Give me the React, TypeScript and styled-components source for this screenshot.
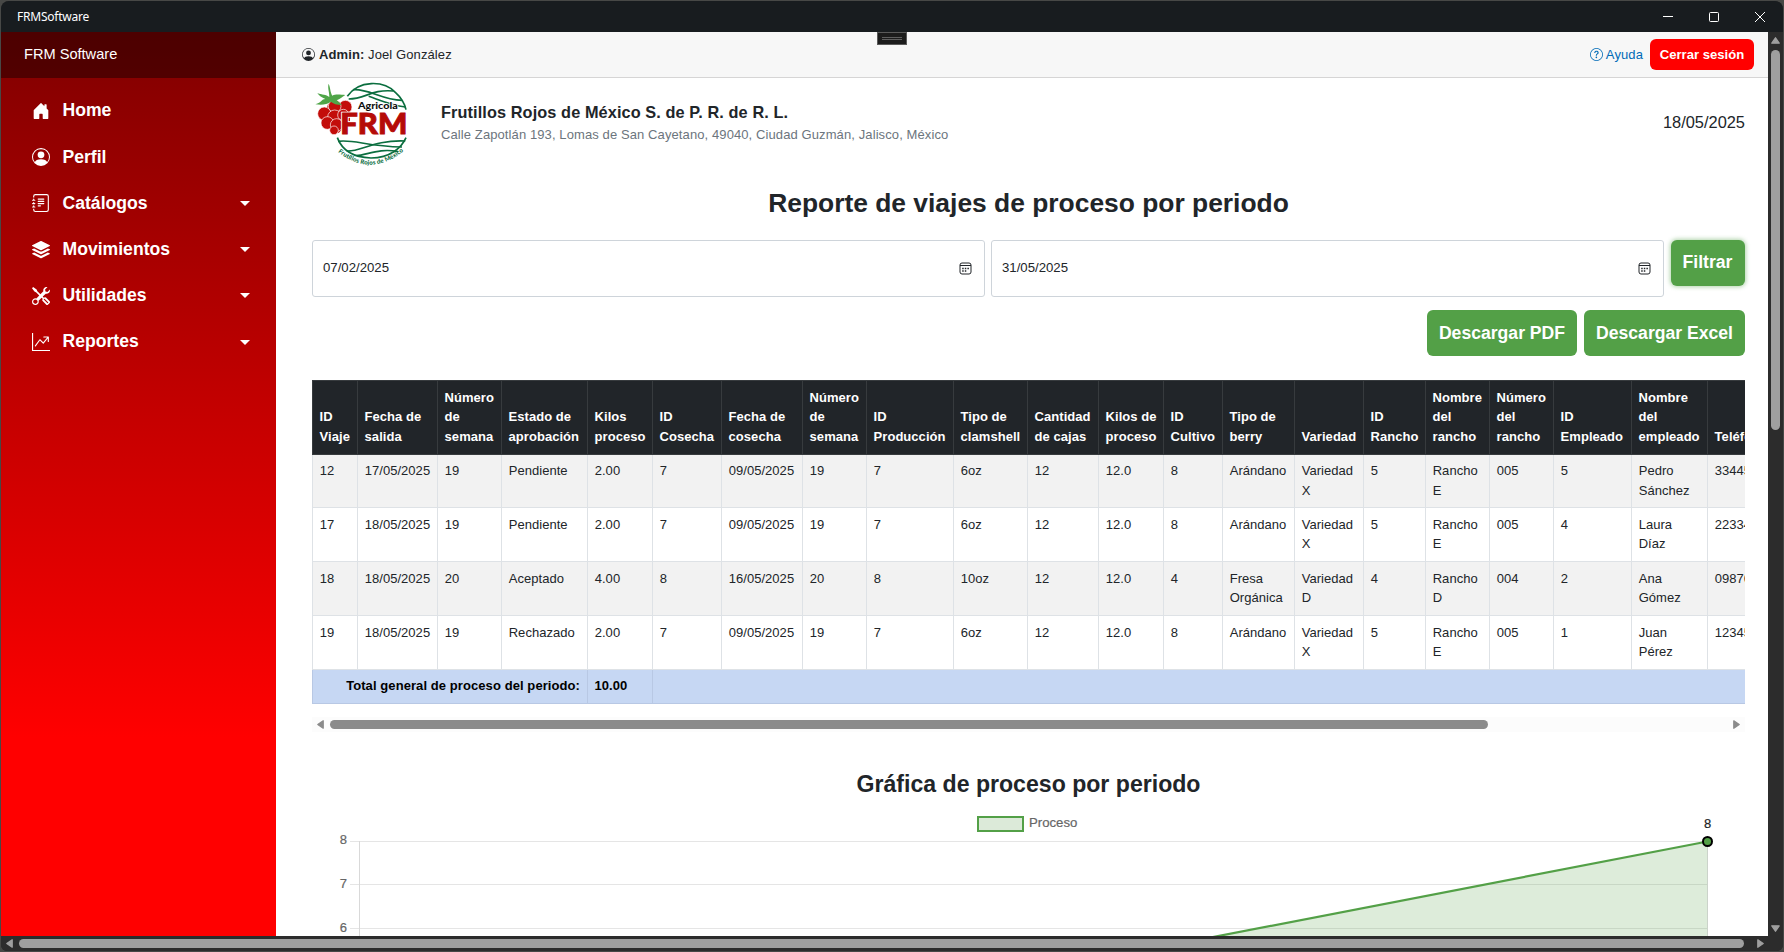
import React from "react";
import styled, { createGlobalStyle, css } from "styled-components";
import {
  BsHouseDoorFill,
  BsPersonCircle,
  BsJournalText,
  BsStack,
  BsTools,
  BsGraphUpArrow,
  BsQuestionCircle,
} from "react-icons/bs";

const GlobalStyle = createGlobalStyle`
  *, *::before, *::after { box-sizing: border-box; }
  body {
    margin: 0;
    overflow: hidden;
    background: #474846;
    color: #212529;
    font: 13px/19.5px "Liberation Sans", Arial, sans-serif;
  }
`;

const Desktop = styled.div`
  width: 1784px;
  height: 952px;
  padding: 1px;
  background: #474846;
`;

const Window = styled.div`
  display: flex;
  flex-direction: column;
  height: 950px;
  overflow: hidden;
  border-radius: 8px 8px 6px 6px;
  background: #2c2c2c;
`;

const TitleBar = styled.div`
  display: flex;
  align-items: center;
  justify-content: space-between;
  flex: none;
  height: 31px;
  padding: 0 17px 0 16px;
  background: #181c1f;
  color: #fff;
  font: 12px/16px "Noto Sans", "Open Sans", sans-serif;
`;

const WindowTitle = styled.span`
  letter-spacing: -0.22px;
`;

const WindowButtons = styled.div`
  display: flex;
  gap: 34px;

  svg {
    display: block;
    width: 12px;
    height: 12px;
    fill: none;
    stroke: #fff;
  }
`;

const Viewport = styled.div`
  display: flex;
  flex: none;
  height: 904px;
`;

const Sidebar = styled.aside`
  flex: none;
  width: 275px;
  background: linear-gradient(180deg, #800000 0%, #ff0000 78%);
  color: #fff;
`;

const Brand = styled.div`
  display: flex;
  align-items: center;
  height: 46px;
  padding: 0 0 0 23px;
  background: rgba(0, 0, 0, 0.4);
  font-size: 14.6px;
`;

const Nav = styled.nav`
  display: flex;
  flex-direction: column;
  padding: 10px 26px 0 31px;
`;

const NavItem = styled.a`
  display: flex;
  align-items: center;
  height: 46.2px;
  font-size: 17.6px;
  font-weight: 700;

  svg {
    width: 18px;
    height: 18px;
    margin-right: 12.5px;
  }
`;

const Caret = styled.span`
  margin-left: auto;
  border: 5px solid transparent;
  border-top-color: #fff;
  border-bottom: 0;
`;

const Main = styled.main`
  display: flex;
  flex-direction: column;
  flex: 1;
  min-width: 0;
  overflow: hidden;
  background: #fff;
`;

const TopBar = styled.header`
  position: relative;
  display: flex;
  align-items: center;
  flex: none;
  height: 46px;
  padding: 0 14px 0 26px;
  border-bottom: 1px solid #d6d5d5;
  background: #f7f7f7;
`;

const DebugHandle = styled.div`
  position: absolute;
  left: 601px;
  top: 0;
  width: 30px;
  height: 13px;
  padding: 4px 4px;
  border: 1px solid #5a5a5a;
  background: #1c1c1c;

  &::before {
    content: "";
    display: block;
    height: 3px;
    border: solid #5f5f5f;
    border-width: 1px 0;
  }
`;

const UserLabel = styled.div`
  display: flex;
  align-items: center;
  gap: 4px;
  letter-spacing: 0.1px;
`;

const HelpLink = styled.a`
  display: flex;
  align-items: center;
  gap: 3px;
  margin-left: auto;
  color: #006bb7;
  letter-spacing: 0.1px;
`;

const LogoutButton = styled.button`
  width: 104px;
  height: 31px;
  margin-left: 7px;
  padding: 0;
  border: 0;
  border-radius: 6px;
  background: #ff0000;
  color: #fff;
  font: 700 13.1px/20px "Liberation Sans", Arial, sans-serif;
`;

const Content = styled.section`
  display: flex;
  flex-direction: column;
  flex: 1;
  padding: 0 23px 0 36px;
`;

const CompanyHeader = styled.div`
  display: flex;
  align-items: center;
  flex: none;
  height: 89px;
`;

const LogoArt = styled.svg`
  width: 100px;
  height: 88px;
  margin-right: 29px;
`;

const CompanyName = styled.div`
  margin: -1px 0 1px;
  font-size: 16.3px;
  font-weight: 700;
  line-height: 24px;
  letter-spacing: 0.1px;
`;

const CompanyAddress = styled.div`
  color: #6c757d;
  line-height: 20px;
  letter-spacing: 0.1px;
`;

const ReportDate = styled.div`
  margin-left: auto;
  font-size: 16.4px;
`;

const PageTitle = styled.h1`
  flex: none;
  margin: 18px 0 19px;
  font-size: 26.4px;
  line-height: 36px;
  text-align: center;
`;

const Filters = styled.div`
  display: flex;
  align-items: flex-start;
  flex: none;
  gap: 6px;
  height: 57px;
`;

const DateField = styled.div`
  display: flex;
  align-items: center;
  justify-content: space-between;
  flex: 1;
  height: 57px;
  padding: 0 12px 2px 10px;
  border: 1px solid #ced4da;
  border-radius: 3px;
  font-size: 13.2px;

  svg {
    width: 13px;
    height: 13px;
    margin-top: 2px;
  }
`;

const GreenButton = styled.button<{ $focused?: boolean }>`
  height: 46px;
  border: 0;
  border-radius: 6px;
  background: #53a047;
  color: #fff;
  font: 700 17.6px/26px "Liberation Sans", Arial, sans-serif;
  ${(p) =>
    p.$focused
      ? css`
          width: 74px;
          margin-left: 1px;
          padding: 0 1px 3px 0;
          box-shadow: 0 0 4px 1px rgba(83, 160, 71, 0.45);
        `
      : css`
          padding: 0 12px 1px;
        `}
`;

const Downloads = styled.div`
  display: flex;
  justify-content: flex-end;
  flex: none;
  gap: 7px;
  margin-top: 13px;
`;

const TableScroller = styled.div`
  flex: none;
  height: 324px;
  margin-top: 24px;
  overflow: hidden;
`;

const Table = styled.table`
  width: 1760px;
  table-layout: fixed;
  border-spacing: 0;
`;

const HeadRow = styled.tr`
  height: 75px;
`;

const HeadCell = styled.th`
  padding: 6px 0 8px 6.6px;
  border: solid #373b3e;
  border-width: 1px 0 1px 1px;
  background: #212529;
  color: #fff;
  text-align: left;
  vertical-align: bottom;
  white-space: pre;
  letter-spacing: 0.04px;
`;

const Row = styled.tr<{ $first: boolean; $striped: boolean }>`
  height: ${(p) => (p.$first ? 53 : 54)}px;
  background: ${(p) => (p.$striped ? "#f2f2f2" : "#fff")};

  td {
    padding-top: ${(p) => (p.$first ? 6 : 6.7)}px;
  }
`;

const Cell = styled.td`
  padding: 0 0 0 6.7px;
  border: solid #dee2e6;
  border-width: 0 0 1px 1px;
  vertical-align: top;
  white-space: pre;
  letter-spacing: 0.04px;
`;

const TotalRow = styled.tr`
  height: 34px;
  background: #c6d7f3;
  color: #000;
  font-weight: 700;
  letter-spacing: 0.08px;
`;

const TotalCell = styled.td<{ $right?: boolean }>`
  padding: 0 7px 1px 6.5px;
  border: solid #b8c8e4;
  border-width: 0 0 1px 1px;
  text-align: ${(p) => (p.$right ? "right" : "left")};
`;

const ScrollTrack = styled.div<{ $tone: "light" | "dark" }>`
  display: flex;
  align-items: center;
  justify-content: space-between;
  flex: none;
  height: 15px;
  margin-top: ${(p) => (p.$tone === "light" ? "13px" : "0")};
  padding: ${(p) => (p.$tone === "light" ? "0 4px" : "0 18px 0 4px")};
  background: ${(p) => (p.$tone === "light" ? "#fcfcfc" : "#2c2c2c")};
`;

const Thumb = styled.div<{ $width: number; $left: number; $color: string }>`
  width: ${(p) => p.$width}px;
  height: 9px;
  margin: 0 auto 0 ${(p) => p.$left}px;
  border-radius: 5px;
  background: ${(p) => p.$color};
`;

const VerticalScroll = styled.div`
  display: flex;
  flex-direction: column;
  align-items: center;
  flex: none;
  width: 15px;
  padding: 5px 0 4px;
  background: #2c2c2c;
`;

const VerticalThumb = styled.div`
  width: 9px;
  height: 380px;
  margin: 6px 0 auto;
  border-radius: 5px;
  background: #9f9f9f;
`;

const ArrowArt = styled.svg<{ $turn: number }>`
  display: block;
  width: 9px;
  height: 7px;
  flex: none;
  transform: rotate(${(p) => p.$turn}deg);
`;

const ChartTitle = styled.h2`
  flex: none;
  margin: 37px 0 0;
  font-size: 23.1px;
  line-height: 30px;
  text-align: center;
`;

const ChartArt = styled.svg`
  display: block;
  flex: none;
  width: 1433px;
  height: 137px;
  font: 13px "Liberation Sans", Arial, sans-serif;
`;

const Arrow = ({ turn, color }: { turn: number; color: string }) => (
  <ArrowArt $turn={turn} viewBox="0 0 9 7">
    <path d="M4.5 0.8 L8.2 6.2 H0.8 Z" fill={color} stroke={color} strokeWidth="1.3" strokeLinejoin="round" />
  </ArrowArt>
);

const CalendarIcon = () => (
  <svg viewBox="0 0 13 13" fill="none" stroke="#212529">
    <rect x="1" y="1" width="11" height="11" rx="2" />
    <path d="M1 3.5H12" />
    <path d="M3.2 6.5h1.5M5.8 6.5h1.5M8.4 6.5h1.5M3.2 9h1.5M5.8 9h1.5" strokeWidth="1.5" />
  </svg>
);

const berries = [
  [136, 108, 20], [104, 106, 19], [73, 128, 20], [104, 138, 21],
  [130, 132, 17], [82, 156, 19], [110, 162, 19], [102, 178, 13],
];

const Logo = () => (
  <LogoArt viewBox="36 24 300 264">
    <defs>
      <path id="logoArc" d="M114 243 Q212 320 310 241" />
    </defs>
    <g fill="none" stroke="#0b6e3f" strokeWidth="5">
      <path d="M142 76 C176 26 252 28 286 64 C304 80 314 98 318 116" />
      <path d="M146 84 C196 84 214 54 280 60" />
      <path d="M160 56 C204 52 244 86 306 88" />
      <path d="M206 76 C236 86 270 102 316 108" />
      <path d="M112 200 C124 232 150 259 213 261 C270 260 304 232 318 200" />
      <path d="M114 211 C160 204 200 226 306 228" />
      <path d="M140 240 C180 244 220 206 316 210" />
      <path d="M170 254 C200 252 240 230 294 242" />
    </g>
    <path d="M84 100 L150 96 L150 150 L116 186 L88 170 L72 140 Z" fill="#c30d0a" />
    <g fill="#c30d0a" stroke="#fff" strokeWidth="2">
      {berries.map(([x, y, r]) => (
        <circle key={`${x}-${y}`} cx={x} cy={y} r={r} />
      ))}
    </g>
    <path
      d="M46 100 C66 94 62 86 76 84 C66 80 56 74 52 66 C66 72 78 70 88 78 C88 62 82 50 86 38 C92 52 90 62 97 74 C108 68 124 72 136 72 C126 78 120 84 110 88 C118 94 122 98 126 102 C110 102 100 98 92 92 C80 102 64 102 46 100 Z"
      fill="#4fa548"
    />
    <text x="121" y="190" fill="#b50b08" stroke="#fff" strokeWidth="8" paintOrder="stroke" fontFamily="Lato, sans-serif" fontWeight="900" fontSize="88" textLength="201" lengthAdjust="spacingAndGlyphs">
      FRM
    </text>
    <text x="121" y="190" fill="none" stroke="#b50b08" strokeWidth="3" aria-hidden="true" fontFamily="Lato, sans-serif" fontWeight="900" fontSize="88" textLength="201" lengthAdjust="spacingAndGlyphs">
      FRM
    </text>
    <text x="174" y="115" fill="#111" stroke="#fff" strokeWidth="4" paintOrder="stroke" fontFamily="Lato, sans-serif" fontWeight="900" fontSize="27" textLength="119" lengthAdjust="spacingAndGlyphs">
      Agricola
    </text>
    <text fill="#0b6e3f" fontFamily="Lato, sans-serif" fontWeight="900" fontSize="18.5">
      <textPath href="#logoArc" textLength="216">Frutillos Rojos de México</textPath>
    </text>
  </LogoArt>
);

const navItems = [
  { label: "Home", icon: BsHouseDoorFill, menu: false },
  { label: "Perfil", icon: BsPersonCircle, menu: false },
  { label: "Catálogos", icon: BsJournalText, menu: true },
  { label: "Movimientos", icon: BsStack, menu: true },
  { label: "Utilidades", icon: BsTools, menu: true },
  { label: "Reportes", icon: BsGraphUpArrow, menu: true },
];

const columns: [string, number][] = [
  ["ID\nViaje", 45],
  ["Fecha de\nsalida", 80],
  ["Número\nde\nsemana", 64],
  ["Estado de\naprobación", 86],
  ["Kilos\nproceso", 65],
  ["ID\nCosecha", 69],
  ["Fecha de\ncosecha", 81],
  ["Número\nde\nsemana", 64],
  ["ID\nProducción", 87],
  ["Tipo de\nclamshell", 74],
  ["Cantidad\nde cajas", 71],
  ["Kilos de\nproceso", 65],
  ["ID\nCultivo", 59],
  ["Tipo de\nberry", 72],
  ["Variedad", 69],
  ["ID\nRancho", 62],
  ["Nombre\ndel\nrancho", 64],
  ["Número\ndel\nrancho", 64],
  ["ID\nEmpleado", 78],
  ["Nombre\ndel\nempleado", 76],
  ["Teléfono", 365],
];

const rows = [
  ["12", "17/05/2025", "19", "Pendiente", "2.00", "7", "09/05/2025", "19", "7", "6oz", "12", "12.0", "8", "Arándano", "Variedad\nX", "5", "Rancho\nE", "005", "5", "Pedro\nSánchez", "3344556677"],
  ["17", "18/05/2025", "19", "Pendiente", "2.00", "7", "09/05/2025", "19", "7", "6oz", "12", "12.0", "8", "Arándano", "Variedad\nX", "5", "Rancho\nE", "005", "4", "Laura\nDíaz", "2233445566"],
  ["18", "18/05/2025", "20", "Aceptado", "4.00", "8", "16/05/2025", "20", "8", "10oz", "12", "12.0", "4", "Fresa\nOrgánica", "Variedad\nD", "4", "Rancho\nD", "004", "2", "Ana\nGómez", "0987654321"],
  ["19", "18/05/2025", "19", "Rechazado", "2.00", "7", "09/05/2025", "19", "7", "6oz", "12", "12.0", "8", "Arándano", "Variedad\nX", "5", "Rancho\nE", "005", "1", "Juan\nPérez", "1234567890"],
];

const Chart = () => (
  <ChartArt viewBox="312 799 1433 137">
    <g stroke="#e5e5e5">
      <path d="M350 841.5H1708M350 884.5H1708M350 928.5H1708" />
      <path d="M359.5 841V936M1707.5 841V936" stroke="#d9d9d9" />
    </g>
    <path d="M1208 938 L1707.5 841.5 V938 Z" fill="#53a047" fillOpacity="0.2" />
    <path d="M1208 938 L1707.5 841.5" stroke="#53a047" strokeWidth="2.2" />
    <circle cx="1707.5" cy="841.5" r="4.5" fill="#53a047" stroke="#000" strokeWidth="2" />
    <rect x="978" y="817" width="45" height="14" fill="#dcead9" stroke="#53a047" strokeWidth="2" />
    <g fill="#666" stroke="#666" strokeWidth="0.2">
      <text x="1029" y="826.5" fontSize="13.2">Proceso</text>
      <text x="339.7" y="844">8</text>
      <text x="339.7" y="888">7</text>
      <text x="339.7" y="932">6</text>
    </g>
    <text x="1704" y="827.5" fill="#222" stroke="#222" strokeWidth="0.2">8</text>
  </ChartArt>
);

const App = () => (
  <Desktop>
    <GlobalStyle />
    <Window>
      <TitleBar>
        <WindowTitle>FRMSoftware</WindowTitle>
        <WindowButtons>
          <svg viewBox="0 0 12 12"><path d="M1 5.5H11" /></svg>
          <svg viewBox="0 0 12 12"><rect x="1.5" y="1.5" width="9" height="9" rx="1" /></svg>
          <svg viewBox="0 0 12 12"><path d="M1 1L11 11M11 1L1 11" /></svg>
        </WindowButtons>
      </TitleBar>
      <Viewport>
        <Sidebar>
          <Brand>FRM Software</Brand>
          <Nav>
            {navItems.map(({ label, icon: Icon, menu }) => (
              <NavItem key={label}>
                <Icon />
                {label}
                {menu && <Caret />}
              </NavItem>
            ))}
          </Nav>
        </Sidebar>
        <Main>
          <TopBar>
            <UserLabel>
              <BsPersonCircle size={13} />
              <span><b>Admin:</b> Joel González</span>
            </UserLabel>
            <DebugHandle />
            <HelpLink>
              <BsQuestionCircle size={13} />
              Ayuda
            </HelpLink>
            <LogoutButton>Cerrar sesión</LogoutButton>
          </TopBar>
          <Content>
            <CompanyHeader>
              <Logo />
              <div>
                <CompanyName>Frutillos Rojos de México S. de P. R. de R. L.</CompanyName>
                <CompanyAddress>
                  Calle Zapotlán 193, Lomas de San Cayetano, 49040, Ciudad Guzmán, Jalisco, México
                </CompanyAddress>
              </div>
              <ReportDate>18/05/2025</ReportDate>
            </CompanyHeader>
            <PageTitle>Reporte de viajes de proceso por periodo</PageTitle>
            <Filters>
              <DateField>07/02/2025<CalendarIcon /></DateField>
              <DateField>31/05/2025<CalendarIcon /></DateField>
              <GreenButton $focused>Filtrar</GreenButton>
            </Filters>
            <Downloads>
              <GreenButton>Descargar PDF</GreenButton>
              <GreenButton>Descargar Excel</GreenButton>
            </Downloads>
            <TableScroller>
              <Table>
                <colgroup>
                  {columns.map(([, width], i) => (
                    <col key={i} width={width} />
                  ))}
                </colgroup>
                <thead>
                  <HeadRow>
                    {columns.map(([label], i) => (
                      <HeadCell key={i}>{label}</HeadCell>
                    ))}
                  </HeadRow>
                </thead>
                <tbody>
                  {rows.map((row, r) => (
                    <Row key={row[0]} $first={r === 0} $striped={r % 2 === 0}>
                      {row.map((value, c) => (
                        <Cell key={c}>{value}</Cell>
                      ))}
                    </Row>
                  ))}
                  <TotalRow>
                    <TotalCell colSpan={4} $right>Total general de proceso del periodo:</TotalCell>
                    <TotalCell>10.00</TotalCell>
                    <TotalCell colSpan={16} />
                  </TotalRow>
                </tbody>
              </Table>
            </TableScroller>
            <ScrollTrack $tone="light">
              <Arrow turn={-90} color="#8b8b8b" />
              <Thumb $width={1158} $left={5} $color="#8b8b8b" />
              <Arrow turn={90} color="#8b8b8b" />
            </ScrollTrack>
            <ChartTitle>Gráfica de proceso por periodo</ChartTitle>
            <Chart />
          </Content>
        </Main>
        <VerticalScroll>
          <Arrow turn={0} color="#9f9f9f" />
          <VerticalThumb />
          <Arrow turn={180} color="#9f9f9f" />
        </VerticalScroll>
      </Viewport>
      <ScrollTrack $tone="dark">
        <Arrow turn={-90} color="#9f9f9f" />
        <Thumb $width={1725} $left={5} $color="#9f9f9f" />
        <Arrow turn={90} color="#9f9f9f" />
      </ScrollTrack>
    </Window>
  </Desktop>
);

export default App;
